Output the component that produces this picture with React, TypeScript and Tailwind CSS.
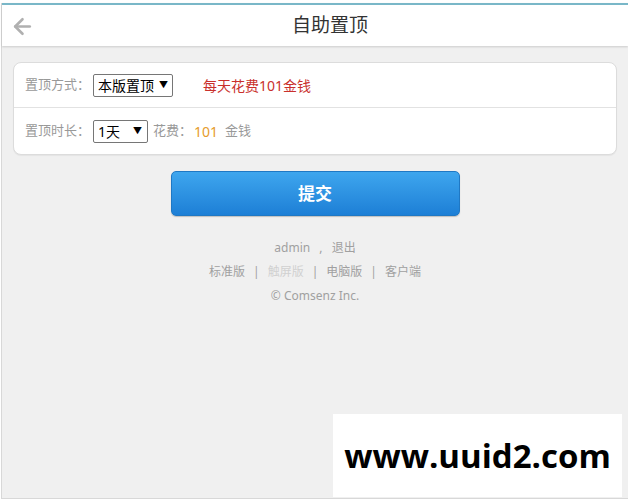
import { ArrowLeft } from "lucide-react";

const font = { fontFamily: '"Noto Sans", "Noto Sans CJK SC", sans-serif' };

export default function App() {
  return (
    <div
      className="relative w-[628px] h-[502px] overflow-hidden bg-white pt-[3px] text-[#999]"
      style={font}
    >
      <div className="flex flex-col h-[496px] ml-px border-l border-b border-[#d8d8d8] bg-[#f0f0f0]">
        {/* Header */}
        <header className="relative h-[43px] flex items-center justify-center pl-[30px] bg-white border-t-2 border-[#79b7c8] shadow-[0_1px_2px_rgba(0,0,0,0.15)]">
          <ArrowLeft className="absolute left-[8px] top-[9px] text-[#b0b0b0]" size={25} strokeWidth={2.5} />
          <h1 className="text-[19px] text-[#333] leading-none">自助置顶</h1>
        </header>

        {/* Form card */}
        <div className="mx-[11px] mt-[16px] bg-white border border-[#dcdcdc] rounded-[8px] shadow-[0_1px_1px_rgba(0,0,0,0.05)]">
          <div className="h-[45px] flex items-center pl-[11px] border-b border-[#e2e2e2] text-[13px]">
            <span>置顶方式：</span>
            <div className="ml-[3px] flex items-center h-[23px] w-[80px] border border-[#767676] rounded-[2px] pl-[4px] pr-[4px] text-[14px] text-black justify-between">
              <span>本版置顶</span>
              <span className="text-[9px]">▼</span>
            </div>
            <span className="ml-[30px] text-[14px] text-[#c9302c]">每天花费101金钱</span>
          </div>
          <div className="h-[46px] flex items-center pl-[11px] text-[13px]">
            <span>置顶时长：</span>
            <div className="ml-[3px] flex items-center h-[23px] w-[55px] border border-[#767676] rounded-[2px] pl-[4px] pr-[5px] text-[14px] text-black justify-between">
              <span>1天</span>
              <span className="text-[9px]">▼</span>
            </div>
            <span className="ml-[5px]">花费：</span>
            <span className="ml-[2px] text-[14px] text-[#e69c2c]">101</span>
            <span className="ml-[7px]">金钱</span>
          </div>
        </div>

        {/* Submit */}
        <button className="self-center mt-[16px] w-[289px] h-[45px] rounded-[5px] bg-gradient-to-b from-[#3ea6ee] to-[#1d7fd6] border border-[#1f78c4] text-white text-[17px] font-bold shadow-[0_1px_1px_rgba(0,0,0,0.2)]">
          提交
        </button>

        {/* Footer */}
        <div className="mt-[23px] flex flex-col items-center gap-[7px] text-[12px] leading-[17px] text-[#a0a0a0]">
          <div>
            admin <span className="mx-[6px]">,</span> 退出
          </div>
          <div className="flex gap-[8px]">
            <span>标准版</span>
            <span>|</span>
            <span className="text-[#d0d0d0]">触屏版</span>
            <span>|</span>
            <span>电脑版</span>
            <span>|</span>
            <span>客户端</span>
          </div>
          <div>© Comsenz Inc.</div>
        </div>
      </div>

      {/* Watermark */}
      <div className="absolute left-[333px] top-[414px] w-[289px] h-[83px] bg-white flex items-center justify-center">
        <span className="text-[33px] font-bold text-black" style={{ fontFamily: '"Open Sans", "DejaVu Sans", sans-serif' }}>
          www.uuid2.com
        </span>
      </div>
    </div>
  );
}
